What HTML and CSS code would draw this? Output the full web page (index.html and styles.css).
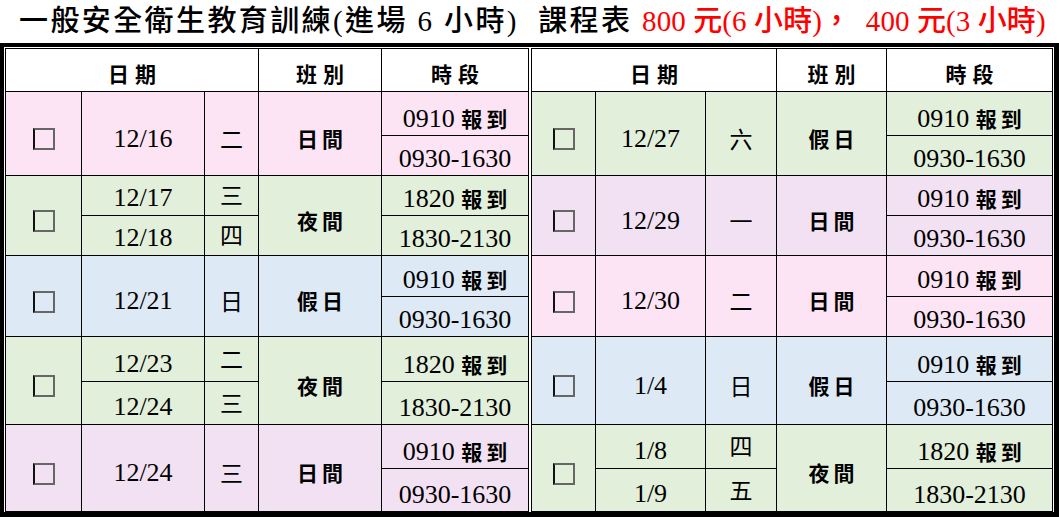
FILE: index.html
```html
<!DOCTYPE html>
<html lang="zh-Hant">
<head>
<meta charset="utf-8">
<title>一般安全衛生教育訓練 課程表</title>
<link rel="stylesheet" href="styles.css">
</head>
<body>
<h1 class="title">一般安全衛生教育訓練(進場 6 小時)  課程表 <span class="price">800 元(6 小時)，  400 元(3 小時)</span></h1>
<div class="frame">
  <div class="sheet sheet-left">
    <div class="hd span3"><span class="k">日期</span></div>
    <div class="hd"><span class="k">班別</span></div>
    <div class="hd"><span class="k">時段</span></div>

    <div class="grp pink">
      <div class="c rs2"><span class="box"></span></div>
      <div class="c rs2">12/16</div>
      <div class="c rs2 wd">二</div>
      <div class="c rs2"><span class="k">日間</span></div>
      <div class="c tm"><span>0910 <span class="k">報到</span></span></div>
      <div class="c tm">0930-1630</div>
    </div>

    <div class="grp green">
      <div class="c rs2"><span class="box"></span></div>
      <div class="c sd">12/17</div>
      <div class="c wd sw">三</div>
      <div class="c rs2"><span class="k">夜間</span></div>
      <div class="c tm"><span>1820 <span class="k">報到</span></span></div>
      <div class="c sd">12/18</div>
      <div class="c wd sw">四</div>
      <div class="c tm">1830-2130</div>
    </div>

    <div class="grp blue">
      <div class="c rs2"><span class="box"></span></div>
      <div class="c rs2">12/21</div>
      <div class="c rs2 wd">日</div>
      <div class="c rs2"><span class="k">假日</span></div>
      <div class="c tm"><span>0910 <span class="k">報到</span></span></div>
      <div class="c tm">0930-1630</div>
    </div>

    <div class="grp green">
      <div class="c rs2"><span class="box"></span></div>
      <div class="c sd">12/23</div>
      <div class="c wd sw">二</div>
      <div class="c rs2"><span class="k">夜間</span></div>
      <div class="c tm"><span>1820 <span class="k">報到</span></span></div>
      <div class="c sd">12/24</div>
      <div class="c wd sw">三</div>
      <div class="c tm">1830-2130</div>
    </div>

    <div class="grp lav">
      <div class="c rs2"><span class="box"></span></div>
      <div class="c rs2">12/24</div>
      <div class="c rs2 wd">三</div>
      <div class="c rs2"><span class="k">日間</span></div>
      <div class="c tm"><span>0910 <span class="k">報到</span></span></div>
      <div class="c tm">0930-1630</div>
    </div>
  </div>

  <div class="sheet sheet-right">
    <div class="hd span3"><span class="k">日期</span></div>
    <div class="hd"><span class="k">班別</span></div>
    <div class="hd"><span class="k">時段</span></div>

    <div class="grp green">
      <div class="c rs2"><span class="box"></span></div>
      <div class="c rs2">12/27</div>
      <div class="c rs2 wd">六</div>
      <div class="c rs2"><span class="k">假日</span></div>
      <div class="c tm"><span>0910 <span class="k">報到</span></span></div>
      <div class="c tm">0930-1630</div>
    </div>

    <div class="grp lav">
      <div class="c rs2"><span class="box"></span></div>
      <div class="c rs2">12/29</div>
      <div class="c rs2 wd">一</div>
      <div class="c rs2"><span class="k">日間</span></div>
      <div class="c tm"><span>0910 <span class="k">報到</span></span></div>
      <div class="c tm">0930-1630</div>
    </div>

    <div class="grp pink">
      <div class="c rs2"><span class="box"></span></div>
      <div class="c rs2">12/30</div>
      <div class="c rs2 wd">二</div>
      <div class="c rs2"><span class="k">日間</span></div>
      <div class="c tm"><span>0910 <span class="k">報到</span></span></div>
      <div class="c tm">0930-1630</div>
    </div>

    <div class="grp blue">
      <div class="c rs2"><span class="box"></span></div>
      <div class="c rs2">1/4</div>
      <div class="c rs2 wd">日</div>
      <div class="c rs2"><span class="k">假日</span></div>
      <div class="c tm"><span>0910 <span class="k">報到</span></span></div>
      <div class="c tm">0930-1630</div>
    </div>

    <div class="grp green">
      <div class="c rs2"><span class="box"></span></div>
      <div class="c sd">1/8</div>
      <div class="c wd sw">四</div>
      <div class="c rs2"><span class="k">夜間</span></div>
      <div class="c tm"><span>1820 <span class="k">報到</span></span></div>
      <div class="c sd">1/9</div>
      <div class="c wd sw">五</div>
      <div class="c tm">1830-2130</div>
    </div>
  </div>
</div>
</body>
</html>
```

FILE: styles.css
```css
html, body {
  margin: 0;
  padding: 0;
  background: #fff;
}

body {
  font-family: "Liberation Serif", "Noto Sans CJK TC", serif;
  color: #000;
  width: 1059px;
  height: 517px;
  overflow: hidden;
}

.title {
  margin: 0;
  height: 43px;
  line-height: 43px;
  padding-left: 19px;
  font-size: 29px;
  font-weight: 500;
  letter-spacing: 2.4px;
  white-space: pre;
  overflow: visible;
}

.price {
  color: #f00;
  letter-spacing: 0.1px;
}

.frame {
  display: flex;
  gap: 2px;
  border-style: solid;
  border-color: #000;
  border-width: 4px 5px 5px 4px;
  padding: 1px 1px 0 1px;
  background: #fff;
}

.sheet {
  flex: none;
  display: grid;
  gap: 1px;
  background: #000;
  border: 1px solid #000;
  grid-template-rows: 42px 43px 39px 39px 39px 40px 39px 44px 42px 43px 42px;
}

.sheet-left {
  grid-template-columns: 75px 122px 53px 122px 146px;
}

.sheet-right {
  grid-template-columns: 63px 109px 70px 109px 165px;
}

.grp {
  display: contents;
}

.pink > * { background: #fce4f5; }
.green > * { background: #e2efda; }
.blue > * { background: #dde9f5; }
.lav > * { background: #f2e1f2; }

.hd {
  background: #fff;
  display: flex;
  align-items: flex-end;
  justify-content: center;
  padding-bottom: 3px;
  line-height: 29px;
}

.hd .k {
  letter-spacing: 6px;
  margin-right: -6px;
}

.span3 {
  grid-column: span 3;
}

.c {
  display: flex;
  align-items: center;
  justify-content: center;
  font-size: 26px;
  line-height: 29px;
  white-space: nowrap;
}

.rs2 {
  grid-row: span 2;
  padding-top: 9px;
}

.tm {
  align-items: flex-end;
  padding-bottom: 2px;
}

.sd {
  align-items: flex-end;
  padding-bottom: 3px;
}

.k {
  font-family: "Noto Sans CJK TC", sans-serif;
  font-size: 21px;
  font-weight: 700;
  letter-spacing: 4px;
  margin-right: -4px;
}

.wd {
  font-family: "Noto Sans CJK TC", sans-serif;
  font-size: 23px;
  font-weight: 400;
}

.sw {
  padding-bottom: 2px;
}

.box {
  display: block;
  width: 22px;
  height: 22px;
  box-sizing: border-box;
  border: 2px solid #666;
  border-left-color: #111;
  margin-top: 2px;
}
```
